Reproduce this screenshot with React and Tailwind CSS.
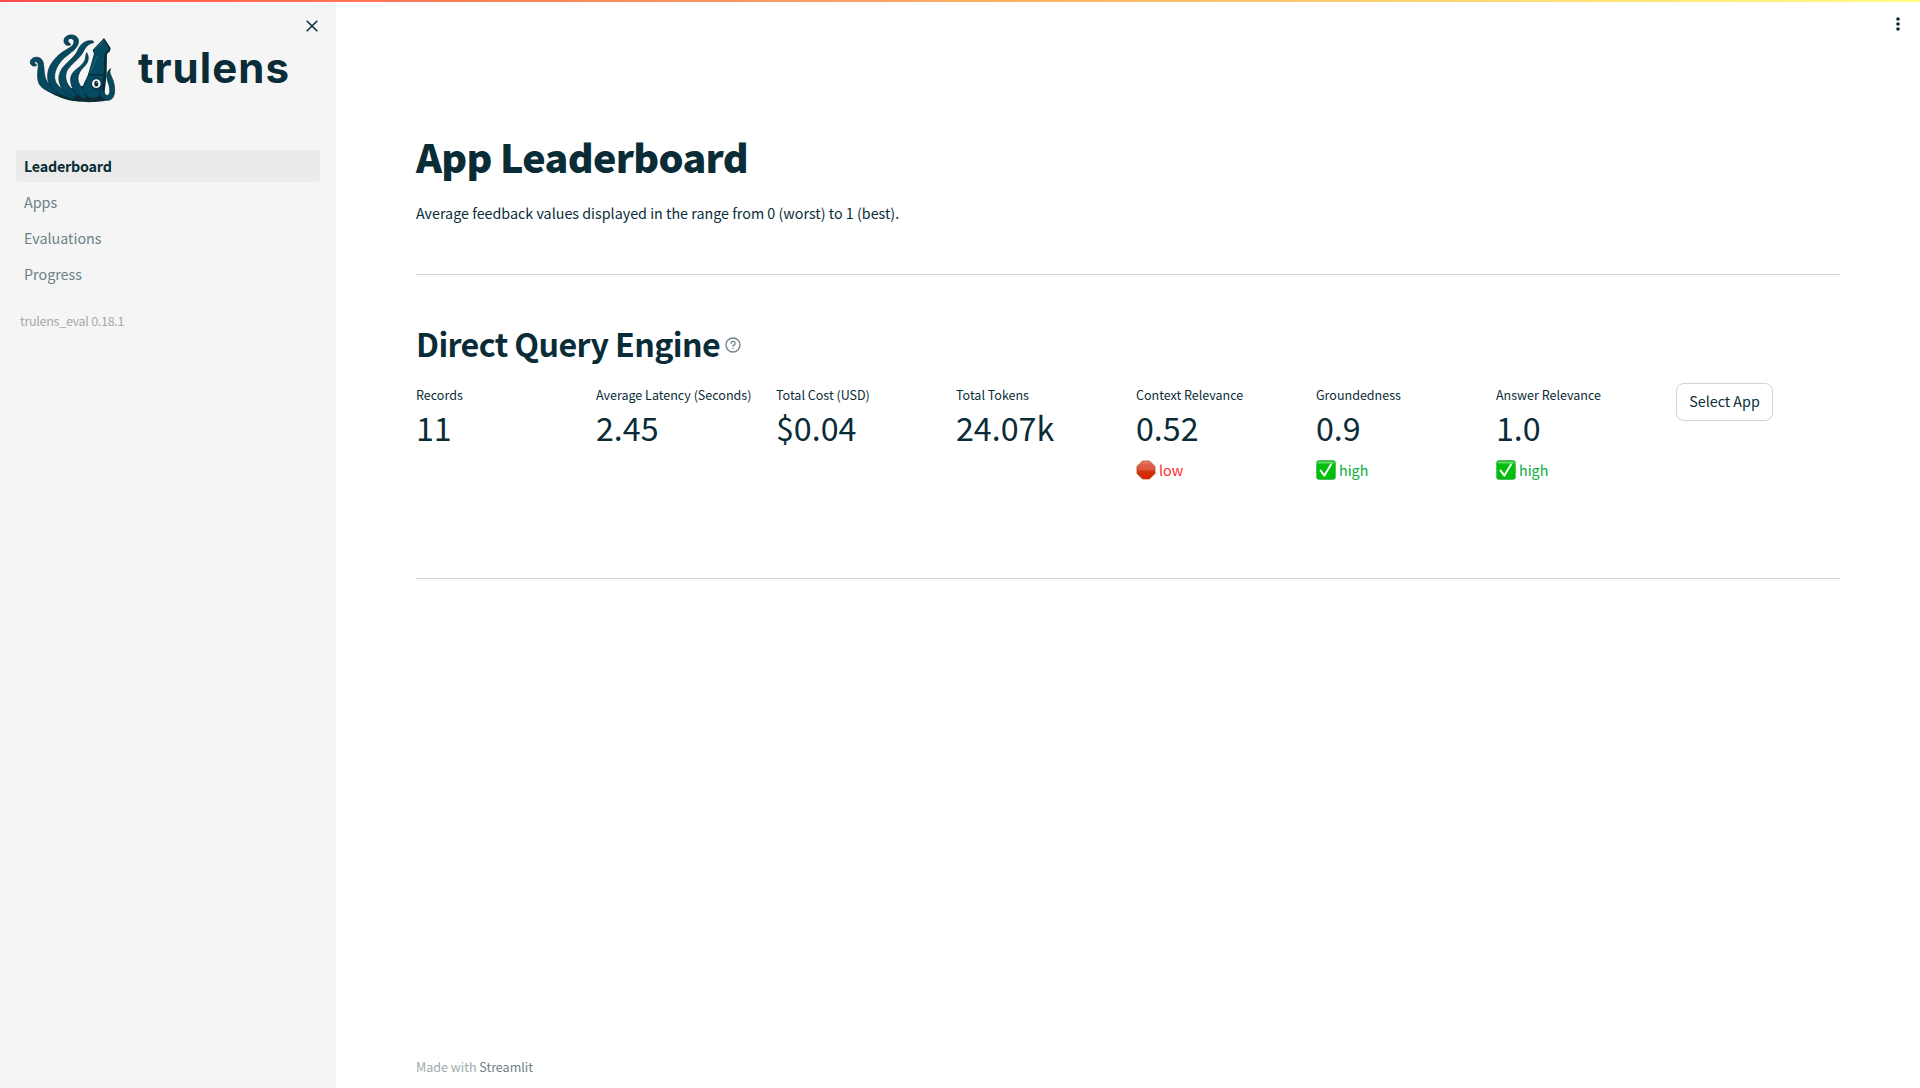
const metrics = [
  { label: 'Records', value: '11' },
  { label: 'Average Latency (Seconds)', value: '2.45' },
  { label: 'Total Cost (USD)', value: '$0.04' },
  { label: 'Total Tokens', value: '24.07k' },
  { label: 'Context Relevance', value: '0.52', status: 'low' },
  { label: 'Groundedness', value: '0.9', status: 'high' },
  { label: 'Answer Relevance', value: '1.0', status: 'high' },
];

const tentacles = [
  'M50 118 C42 124 30 118 31 107 C32 92 62 86 69 108 C74 128 70 150 82 168 C92 180 120 196 140 204 L150 214 C110 208 76 196 62 180 C48 164 54 136 55 118 C54 106 44 104 43 110 C44 114 48 112 50 118Z',
  'M152 56 C140 62 131 54 132 42 C134 24 168 20 175 40 C180 66 150 80 130 98 C106 122 98 150 108 170 C116 186 150 204 170 208 L160 220 C120 210 90 190 84 164 C78 130 96 104 120 84 C140 68 164 62 162 46 C160 36 146 34 144 44 C144 50 150 50 152 56Z',
  'M221 50 C206 52 200 60 192 72 C184 96 152 112 140 136 C132 158 140 184 176 204 L160 214 C124 196 112 170 118 146 C124 118 160 100 172 76 C180 54 198 40 219 45Z',
  'M200 80 C208 92 206 108 194 120 C180 134 174 144 174 160 C176 182 196 196 214 206 L190 218 C166 206 150 184 152 156 C156 130 186 124 194 104 C198 96 196 88 200 80Z',
];

function Squid() {
  return (
    <svg viewBox="0 0 330 255" className="h-[85px] w-[110px] shrink-0" strokeLinejoin="round">
      <path d="M70 178 C100 200 150 190 200 176 L250 190 L262 222 C240 231 170 231 134 219 C104 209 80 198 70 178Z" fill="#0a2c37" />
      <g fill="#044a60" stroke="#0a2c37" strokeWidth="2.2">
        {tentacles.map((d) => (
          <path key={d} d={d} />
        ))}
      </g>
      <path d="M252 36 L272 66 L270 76 L261 84 L260 146 L252 214 L196 214 L190 176 L204 146 L222 84 L218 72Z" fill="#0a2c37" />
      <path d="M250 40 L267 68 L253 84 L251 145 L205 145 L224 86 L221 72Z" fill="#044a60" />
      <path d="M204 149 L250 149 L244 196 C240 214 226 218 210 214 C196 208 188 190 192 176Z" fill="#044a60" />
      <path d="M250 44 L226 70M230 90 L214 134" stroke="#2a6f84" strokeWidth="2.5" />
      <path d="M272 128 C266 140 274 148 280 166 C288 196 284 222 264 223 C246 224 236 204 238 190 L248 188 C252 200 256 210 264 208 C272 204 270 184 264 168 C258 150 260 136 272 128Z" fill="#044a60" stroke="#0a2c37" strokeWidth="2.2" />
      <circle cx="229" cy="173" r="16" fill="#0a2c37" />
      <circle cx="229" cy="173" r="13" fill="#fff" />
      <ellipse cx="229" cy="173" rx="6" ry="8.5" fill="#0a2c37" />
      <circle cx="231" cy="169" r="1.8" fill="#fff" />
    </svg>
  );
}

function StatusIcon({ status }) {
  if (status === 'low') {
    return (
      <svg viewBox="0 0 20 20" className="size-5 shrink-0">
        <defs>
          <linearGradient id="stop" x1="0" y1="0" x2="0" y2="1">
            <stop offset="0" stopColor="#e58a78" />
            <stop offset=".2" stopColor="#de6048" />
            <stop offset=".45" stopColor="#dc5a40" />
            <stop offset=".6" stopColor="#d42e0a" />
            <stop offset="1" stopColor="#d42600" />
          </linearGradient>
        </defs>
        <path d="M6.5 1h7L19 6.5v7L13.5 19h-7L1 13.5v-7Z" fill="url(#stop)" stroke="#b8321c" strokeWidth=".7" />
      </svg>
    );
  }
  return (
    <svg viewBox="0 0 20 20" className="size-5 shrink-0">
      <rect x="0.3" y="0.3" width="19.4" height="19.4" rx="3" fill="#12a52a" />
      <rect x="1" y="1" width="18" height="18" rx="2.4" fill="#02bf0b" />
      <path d="M2 1.4h16l.6 2H1.4z" fill="#63dc68" />
      <path d="M4.6 10.6 8.4 15.6 15 4.6" fill="none" stroke="#fff" strokeWidth="2" strokeLinecap="round" strokeLinejoin="round" />
    </svg>
  );
}

function Metric({ label, value, status }) {
  return (
    <div className="flex flex-col pt-0.5 whitespace-nowrap">
      <div className="h-5 text-[12.53px] leading-5">{label}</div>
      <div className="h-[45px] text-[32.2px] leading-[45px]">{value}</div>
      {status && (
        <div className={status === 'low' ? 'mt-[10px] flex h-5 items-center gap-[3px] text-[#ff2b2b]' : 'mt-[10px] flex h-5 items-center gap-[3px] text-[#09ab3b]'}>
          <StatusIcon status={status} />
          <span className="text-[14.32px] leading-5">{status}</span>
        </div>
      )}
    </div>
  );
}

export default function App() {
  return (
    <div className="relative flex h-[1088px] w-[1920px] overflow-hidden bg-white font-['Noto_Sans_CJK_SC',sans-serif] text-[#0a2c37]">
      <div className="absolute inset-x-0 top-0 h-0.5 bg-linear-to-r from-[#ff4b4b] to-[#fffd80]" />
      <aside className="flex w-[336px] shrink-0 flex-col bg-[#f5f5f5]">
        <div className="flex h-[150px] items-start pt-[26px] pl-5">
          <Squid />
          <div className="mt-[17px] ml-2 w-[150px] font-['Inter',sans-serif] text-[42px] leading-[50px] font-bold tracking-[1.05px]">trulens</div>
          <svg viewBox="0 0 12 12" className="-mt-[6px] ml-[18px] size-3 shrink-0" stroke="#0a2c37" strokeWidth="1.5">
            <path d="M.7.7l10.6 10.6M11.3.7L.7 11.3" />
          </svg>
        </div>
        <nav className="mx-4 flex flex-col gap-1 text-[14.32px]">
          <a className="h-8 rounded bg-[#ebebeb] px-2 leading-8 font-bold tracking-[-0.22px]">Leaderboard</a>
          <a className="h-8 px-2 leading-8 text-[#6c8087]">Apps</a>
          <a className="h-8 px-2 leading-8 text-[#6c8087]">Evaluations</a>
          <a className="h-8 px-2 leading-8 text-[#6c8087]">Progress</a>
        </nav>
        <div className="mt-[21px] ml-5 text-[12.53px] leading-5 tracking-[-0.28px] text-[#a9a9a9]">trulens_eval 0.18.1</div>
      </aside>
      <main className="flex w-[1584px] shrink-0 flex-col px-20 pt-[129px]">
        <h1 className="h-[53px] text-[39.4px] leading-[53px] font-black tracking-[-0.7px]">App Leaderboard</h1>
        <p className="mt-[19px] h-6 text-[14.32px] leading-6">Average feedback values displayed in the range from 0 (worst) to 1 (best).</p>
        <hr className="mt-[49px] border-[#ced5d7]" />
        <div className="mt-[47px] flex h-[43px] items-center gap-[5px]">
          <h2 className="text-[32.2px] leading-[43px] font-bold tracking-[-0.6px]">Direct Query Engine</h2>
          <svg viewBox="0 0 16 16" className="mt-0.5 size-4" fill="none" stroke="#6c8087" strokeWidth="1.3" strokeLinecap="round">
            <circle cx="8" cy="8" r="7" />
            <path d="M6.1 6.3a2 2 0 1 1 2.7 1.9q-.8.4-.8 1M8 11.4v.1" />
          </svg>
        </div>
        <div className="mt-[18px] grid h-[195px] grid-cols-8 items-start gap-4">
          {metrics.map((m) => (
            <Metric key={m.label} {...m} />
          ))}
          <button className="flex h-[38px] w-[97px] justify-center rounded-lg border border-[#ced5d7] text-[14.32px] leading-[34px] whitespace-nowrap">Select App</button>
        </div>
        <hr className="border-[#ced5d7]" />
        <footer className="mt-auto mb-[11px] text-[12.53px] leading-5 text-[#9daaae]">
          Made with <span className="text-[#6c8087]">Streamlit</span>
        </footer>
      </main>
      <svg viewBox="0 0 4 16" className="absolute top-4 right-5 h-4 w-1" fill="#0a2c37">
        <circle cx="2" cy="3" r="1.8" />
        <circle cx="2" cy="8" r="1.8" />
        <circle cx="2" cy="13" r="1.8" />
      </svg>
    </div>
  );
}
